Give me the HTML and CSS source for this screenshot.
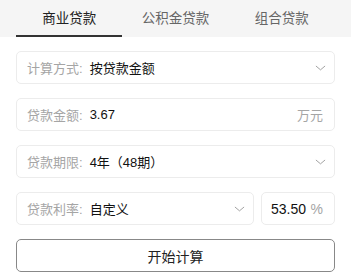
FILE: index.html
```html
<!DOCTYPE html>
<html lang="zh-CN">
<head>
  <meta charset="UTF-8">
  <meta name="viewport" content="width=device-width, initial-scale=1.0">
  <title>房贷计算器</title>
  <link rel="stylesheet" href="styles.css">
</head>
<body>
  <!-- Tabs -->
  <nav class="tabs">
    <div class="tab active">商业贷款</div>
    <div class="tab">公积金贷款</div>
    <div class="tab">组合贷款</div>
  </nav>

  <div class="form">
    <div class="field">
      <span class="label">计算方式:</span>
      <span class="value">按贷款金额</span>
      <svg class="chevron" viewBox="0 0 12 6"><path d="M1 0.8 L6 5 L11 0.8"/></svg>
    </div>

    <div class="field">
      <span class="label">贷款金额:</span>
      <span class="value">3.67</span>
      <span class="unit">万元</span>
    </div>

    <div class="field">
      <span class="label">贷款期限:</span>
      <span class="value">4年（48期）</span>
      <svg class="chevron" viewBox="0 0 12 6"><path d="M1 0.8 L6 5 L11 0.8"/></svg>
    </div>

    <div class="row">
      <div class="field grow">
        <span class="label">贷款利率:</span>
        <span class="value">自定义</span>
        <svg class="chevron" viewBox="0 0 12 6"><path d="M1 0.8 L6 5 L11 0.8"/></svg>
      </div>
      <div class="field rate">
        <span class="value">53.50</span>
        <span class="unit">%</span>
      </div>
    </div>

    <button class="submit">开始计算</button>
  </div>
</body>
</html>
```

FILE: styles.css
```css
body {
  margin: 0;
  padding: 0;
  background-color: #fff;
  color: #333;
  font-family: "Liberation Sans", "Noto Sans CJK SC", sans-serif;
  font-size: 13px;
}

/* Tabs */
.tabs {
  display: flex;
  background-color: #f5f5f5;
  height: 37px;
  padding: 0 16px;
}

.tab {
  flex: 1;
  text-align: center;
  line-height: 37px;
  font-size: 13.5px;
  color: #666;
  box-sizing: border-box;
}

.tab.active {
  color: #222;
  border-bottom: 2px solid #333;
  line-height: 37px;
  height: 37px;
}

/* Form */
.form {
  padding: 14px 16px 0;
  display: flex;
  flex-direction: column;
  gap: 14px;
}

.field {
  display: flex;
  align-items: center;
  height: 33px;
  box-sizing: border-box;
  border: 1px solid #ececec;
  border-radius: 5px;
  padding: 0 8px 0 10px;
}

.label {
  color: #a5a5a5;
  margin-right: 7px;
}

.value {
  color: #111;
  flex: 1;
}

.unit {
  color: #a5a5a5;
  padding-right: 3px;
}

.chevron {
  width: 11px;
  height: 6px;
  fill: none;
  stroke: #999;
  stroke-width: 1;
}

.row {
  display: flex;
  gap: 7px;
}

.grow {
  flex: 1;
}

.rate {
  width: 74px;
  padding: 0 8px 0 9px;
}

.rate .value {
  font-size: 14px;
}

.rate .unit {
  font-size: 14px;
  padding-right: 3px;
}

.submit {
  height: 33px;
  background: #fff;
  border: 1px solid #888;
  border-radius: 5px;
  font-family: inherit;
  font-size: 14px;
  color: #222;
  cursor: pointer;
}
```
